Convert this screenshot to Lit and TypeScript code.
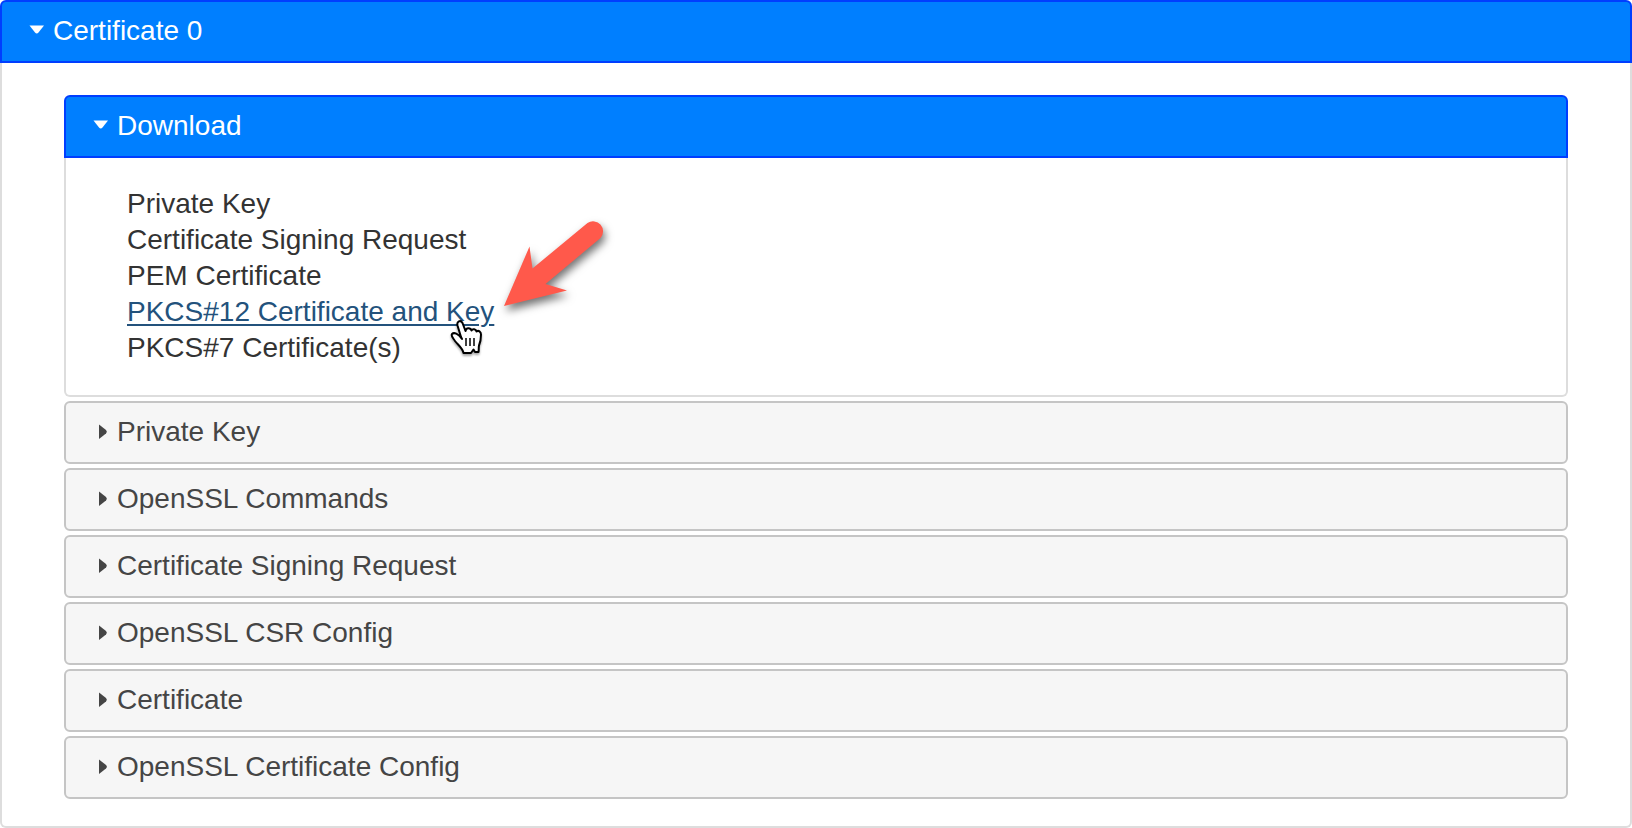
import { LitElement, html, svg, css, nothing } from "lit";
import { customElement, property, state } from "lit/decorators.js";

@customElement("accordion-section")
class AccordionSection extends LitElement {
  @property() label = "";
  @property({ type: Boolean, reflect: true }) open = false;

  static styles = css`
    :host {
      display: block;
      font-family: "Liberation Sans", Arial, Helvetica, sans-serif;
      font-size: 28px;
      line-height: 36px;
    }
    .heading {
      margin: 0;
      font: inherit;
    }
    .toggle {
      display: flex;
      align-items: center;
      gap: 8px;
      box-sizing: border-box;
      width: 100%;
      min-height: 63px;
      margin: 0;
      padding: 11px 24px 12px;
      border: 2px solid #c5c5c5;
      border-radius: 6px;
      background: #f6f6f6;
      color: #454545;
      font: inherit;
      text-align: left;
      cursor: pointer;
    }
    .toggle.open {
      border-color: #003eff;
      border-radius: 6px 6px 0 0;
      background: #007fff;
      color: #fff;
    }
    .marker {
      flex: none;
      width: 19px;
      height: 20px;
      fill: currentColor;
    }
    .panel {
      border: 2px solid #ddd;
      border-top: 0;
      border-radius: 0 0 6px 6px;
      background: #fff;
      color: #333;
    }
  `;

  private toggle() {
    this.open = !this.open;
  }

  render() {
    return html`
      <h3 class="heading">
        <button
          class="toggle ${this.open ? "open" : ""}"
          type="button"
          aria-expanded=${this.open ? "true" : "false"}
          @click=${this.toggle}
        >
          <svg class="marker" viewBox="0 0 19 20" aria-hidden="true">
            ${this.open
              ? svg`<path d="M3.500 4.500H18L12.500 11.500Q10.800 13.500 9 11.500Z" />`
              : svg`<path d="M9 2.500V17L16 11.500Q17.800 9.800 16 8Z" />`}
          </svg>
          <span>${this.label}</span>
        </button>
      </h3>
      ${this.open ? html`<div class="panel"><slot></slot></div>` : nothing}
    `;
  }
}

@customElement("app-root")
class AppRoot extends LitElement {
  @state() private files = [
    "Private Key",
    "Certificate Signing Request",
    "PEM Certificate",
    "PKCS#12 Certificate and Key",
    "PKCS#7 Certificate(s)",
  ];
  @state() private active = "PKCS#12 Certificate and Key";

  private sections = [
    "Private Key",
    "OpenSSL Commands",
    "Certificate Signing Request",
    "OpenSSL CSR Config",
    "Certificate",
    "OpenSSL Certificate Config",
  ];

  static styles = css`
    :host {
      display: block;
      background: #fff;
    }
    .sections {
      display: flex;
      flex-direction: column;
      gap: 4px;
      padding: 32px 62px 27px;
    }
    .files {
      margin: 0;
      padding: 28px 61px 29px;
      list-style: none;
    }
    .file {
      height: 36px;
    }
    .link {
      position: relative;
      color: #333;
      text-decoration: none;
    }
    .link.active {
      color: #23527c;
      text-decoration: underline;
      text-decoration-thickness: 2px;
      text-underline-offset: 3px;
    }
    .arrow,
    .pointer {
      position: absolute;
      pointer-events: none;
      overflow: visible;
    }
    .arrow {
      left: 100%;
      bottom: 17px;
      width: 120px;
      height: 100px;
      filter: drop-shadow(2px 5px 4px rgba(0, 0, 0, 0.55));
    }
    .pointer {
      right: 8px;
      top: 23px;
      width: 36px;
      height: 38px;
      filter: drop-shadow(0 2px 1px rgba(0, 0, 0, 0.35));
    }
  `;

  private renderPointer() {
    return html`
      <svg class="arrow" viewBox="0 0 120 100" aria-hidden="true">
        <path
          fill="#ff594b"
          d="M10 96L35.5 36.5L38.5 58.500L93.500 13A10 10 0 0 1 106.500 28L51.500 74L73 80.500Z"
        />
      </svg>
      <svg class="pointer" viewBox="0 0 36 38" aria-hidden="true">
        <path
          fill="#fff"
          stroke="#000"
          stroke-width="2"
          stroke-linejoin="round"
          d="M11 18L7.500 6.500C6.500 2.500 10.500 0.500 12.500 4L15.500 12C16 8.500 20.500 8.500 21.500 11.500C22.500 9.500 26 10 26.500 12.500C28.500 11 31 12.500 31 15.500C31 21 30.500 23 29 26.500C28.500 29 29 30.500 28.500 33H25L23.500 30.500L21 34H13.500C12.500 29 8 26 5 22C3.500 19.500 0.500 17 2 15C4 13 8 14.500 12 20Z"
        />
        <path fill="none" stroke="#000" stroke-width="1.5" d="M16 19v8M20 19v8M24 19v8" />
      </svg>
    `;
  }

  render() {
    return html`
      <accordion-section label="Certificate 0" open>
        <div class="sections">
          <accordion-section label="Download" open>
            <ul class="files">
              ${this.files.map(
                (name) => html`<li class="file">
                  <a
                    class="link ${name === this.active ? "active" : ""}"
                    href="#"
                    >${name}${name === this.active ? this.renderPointer() : nothing}</a
                  >
                </li>`
              )}
            </ul>
          </accordion-section>
          ${this.sections.map(
            (name) => html`<accordion-section label=${name}></accordion-section>`
          )}
        </div>
      </accordion-section>
    `;
  }
}
